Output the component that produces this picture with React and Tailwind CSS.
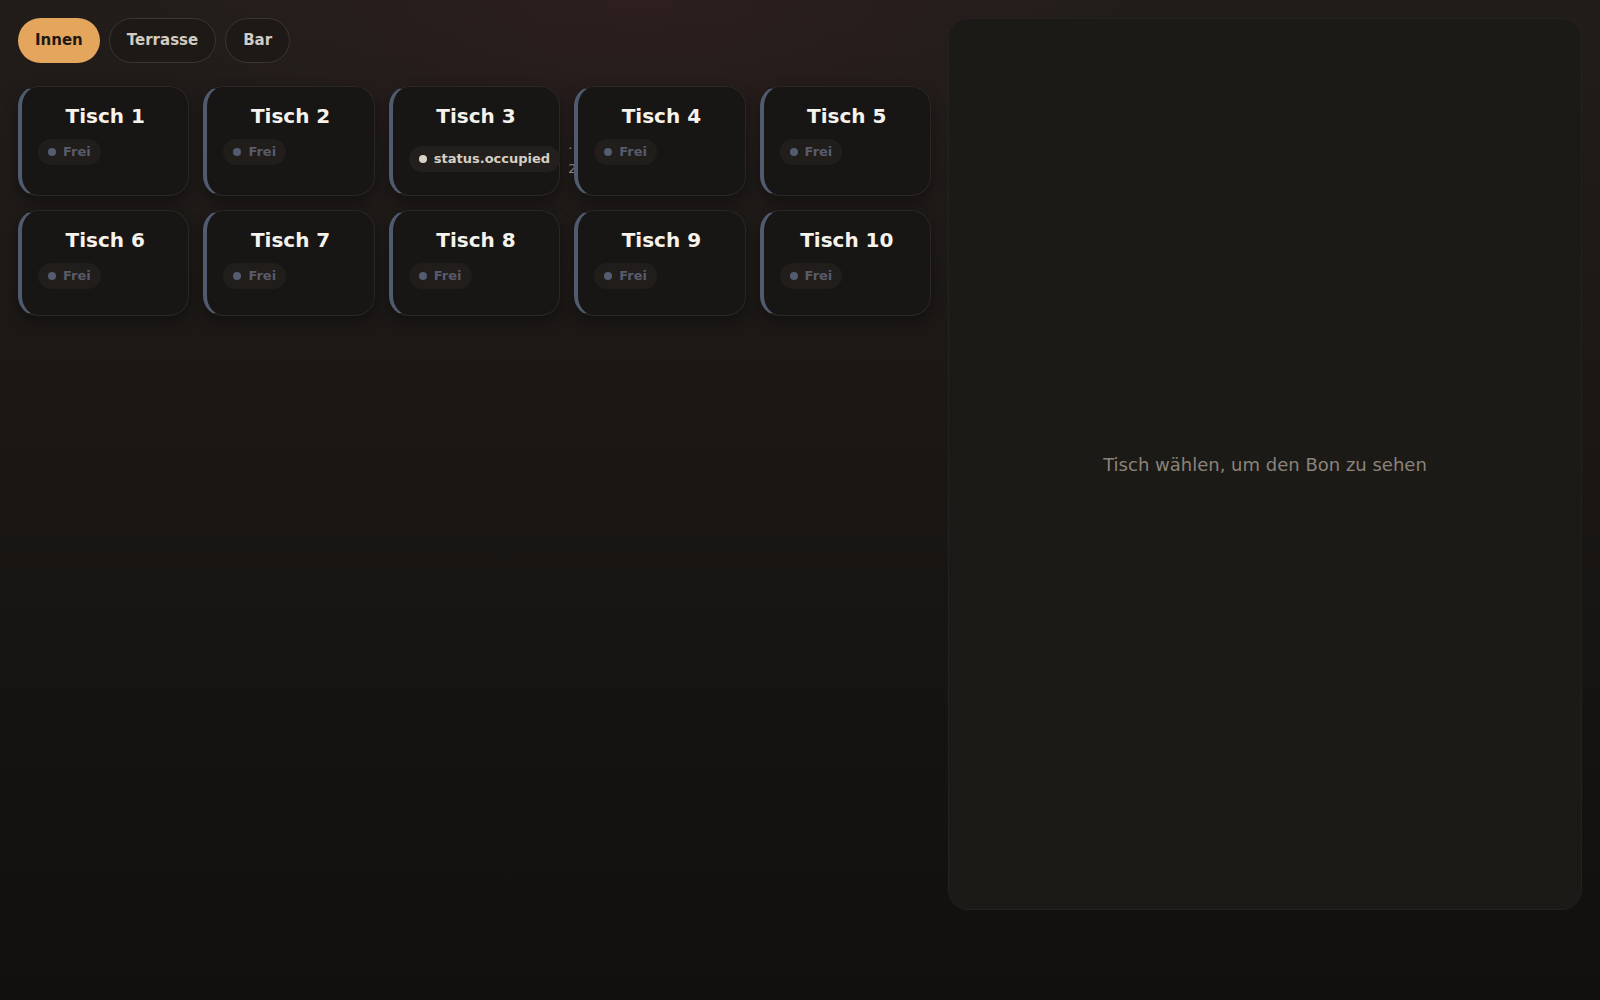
import React, { useState } from 'react';

const tables = [
    { id: 1, name: 'Tisch 1', status: 'free' },
    { id: 2, name: 'Tisch 2', status: 'free' },
    { id: 3, name: 'Tisch 3', status: 'occupied', guests: '2 Gäste' },
    { id: 4, name: 'Tisch 4', status: 'free' },
    { id: 5, name: 'Tisch 5', status: 'free' },
    { id: 6, name: 'Tisch 6', status: 'free' },
    { id: 7, name: 'Tisch 7', status: 'free' },
    { id: 8, name: 'Tisch 8', status: 'free' },
    { id: 9, name: 'Tisch 9', status: 'free' },
    { id: 10, name: 'Tisch 10', status: 'free' },
];

const areas = ['Innen', 'Terrasse', 'Bar'];

const TableCard = ({ table, onSelect }) => {
    const occupied = table.status === 'occupied';
    return (
        <button
            onClick={() => onSelect(table.id)}
            className="relative flex min-h-[106px] flex-col rounded-[20px] border border-[#2a2724] border-l-4 border-l-[#505b70] bg-[#181614] px-4 pt-[15px] pb-4 text-left shadow-[0_6px_14px_rgba(0,0,0,0.35)]"
        >
            <h3 className="w-full text-center text-[20px] font-bold leading-[28px] text-[#f6f2ec]">{table.name}</h3>
            <div className="mt-[9px] flex items-center gap-2">
                {occupied ? (
                    <span className="flex h-[26px] shrink-0 items-center gap-[7px] whitespace-nowrap rounded-full bg-[#221f1c] px-[10px] text-[13px] font-bold text-[#d6cfc4]">
                        <span className="h-2 w-2 rounded-full bg-[#dad3c7]"></span>
                        status.occupied
                    </span>
                ) : (
                    <span className="flex h-[26px] shrink-0 items-center gap-[7px] whitespace-nowrap rounded-full bg-[#201d1b] px-[10px] text-[13px] font-bold text-[#585b6a]">
                        <span className="h-2 w-2 rounded-full bg-[#545c70]"></span>
                        Frei
                    </span>
                )}
                {occupied && (
                    <div className="flex shrink-0 flex-col whitespace-nowrap text-[13px] leading-5 text-[#9d978d]">
                        <span>·</span>
                        <span>{table.guests}</span>
                    </div>
                )}
            </div>
        </button>
    );
};

const App = () => {
    const [area, setArea] = useState('Innen');
    const [selected, setSelected] = useState(null);

    return (
        <div
            className="min-h-screen bg-[radial-gradient(ellipse_30%_18%_at_40%_0%,rgba(58,34,32,0.45),transparent),linear-gradient(to_bottom,#221d1b,#191614_50%,#11100e)] p-[18px]"
            style={{ fontFamily: '"DejaVu Sans", "Liberation Sans", sans-serif' }}
        >
            <div className="flex gap-[17px]">
                <div className="flex-1">
                    <div className="mb-[23px] flex gap-[9px]">
                        {areas.map((a) => (
                            <button
                                key={a}
                                onClick={() => setArea(a)}
                                className={
                                    a === area
                                        ? 'h-[45px] rounded-full bg-[#e4a65c] px-[17px] text-[15px] font-bold text-[#1d1915]'
                                        : 'h-[45px] rounded-full border border-[#3a3633] bg-[#1c1917] px-[17px] text-[15px] font-bold text-[#d2cbc1]'
                                }
                            >
                                {a}
                            </button>
                        ))}
                    </div>
                    <div className="grid grid-cols-5 gap-[14px]">
                        {tables.map((t) => (
                            <TableCard key={t.id} table={t} onSelect={setSelected} />
                        ))}
                    </div>
                </div>
                <div className="flex h-[892px] w-[634px] items-center justify-center rounded-[20px] border border-[#232120] bg-[#1c1a17]">
                    <p className="text-[18px] text-[#8a837a]">
                        {selected ? `Tisch ${selected}` : 'Tisch wählen, um den Bon zu sehen'}
                    </p>
                </div>
            </div>
        </div>
    );
};

export default App;
